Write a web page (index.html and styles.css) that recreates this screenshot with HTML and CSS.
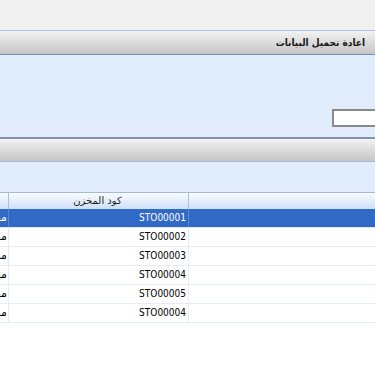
FILE: index.html
```html
<!DOCTYPE html>
<html lang="ar">
<head>
  <meta charset="UTF-8" />
  <meta name="viewport" content="width=device-width, initial-scale=1.0" />
  <title>اعادة تحميل البيانات</title>
  <link rel="stylesheet" href="styles.css">
</head>
<body>

  <div class="top"></div>

  <!-- section title -->
  <div class="bar bar-title">
    <span class="title">اعادة تحميل البيانات</span>
  </div>

  <div class="panel panel-search">
    <input type="text" class="search-box">
  </div>

  <div class="bar bar-plain"></div>
  <div class="panel panel-small"></div>

  <!-- stores grid -->
  <div class="grid">
    <div class="row head">
      <div class="cell c-extra"></div>
      <div class="cell c-code">كود المخزن</div>
      <div class="cell c-name"></div>
    </div>
    <div class="row selected">
      <div class="cell c-extra"></div>
      <div class="cell c-code">STO00001</div>
      <div class="cell c-name">مخزن</div>
    </div>
    <div class="row">
      <div class="cell c-extra"></div>
      <div class="cell c-code">STO00002</div>
      <div class="cell c-name">مخزن</div>
    </div>
    <div class="row">
      <div class="cell c-extra"></div>
      <div class="cell c-code">STO00003</div>
      <div class="cell c-name">مخزن</div>
    </div>
    <div class="row">
      <div class="cell c-extra"></div>
      <div class="cell c-code">STO00004</div>
      <div class="cell c-name">مخزن</div>
    </div>
    <div class="row">
      <div class="cell c-extra"></div>
      <div class="cell c-code">STO00005</div>
      <div class="cell c-name">مخزن</div>
    </div>
    <div class="row">
      <div class="cell c-extra"></div>
      <div class="cell c-code">STO00004</div>
      <div class="cell c-name">مخزن</div>
    </div>
  </div>

</body>
</html>
```

FILE: styles.css
```css
body {
  margin: 0;
  font-family: 'DejaVu Sans', sans-serif;
  font-size: 11px;
  background: #fff;
  color: #000;
  overflow: hidden;
}
.top {
  height: 30px;
  background: #f0f0f0;
}
.bar {
  background: linear-gradient(#f3f3f3, #c5c5c5);
}
.bar-title {
  height: 23px;
  border-top: 1px solid #aec3e6;
  border-bottom: 1px solid #7890b6;
  direction: rtl;
  display: flex;
  align-items: center;
  padding-right: 10px;
}
.title {
  font-family: 'DejaVu Sans Condensed', 'DejaVu Sans', sans-serif;
  font-weight: bold;
  font-size: 10px;
  color: #1a1a1a;
}
.panel {
  background: #e1edfd;
}
.panel-search {
  height: 82px;
  direction: rtl;
  box-sizing: border-box;
  padding-top: 54px;
}
.search-box {
  display: block;
  width: 60px;
  height: 18px;
  box-sizing: border-box;
  margin: 0 -17px 0 0;
  border: 2px solid #8a8a8a;
  border-right: none;
  background: #fff;
}
.bar-plain {
  height: 22px;
  border-top: 2px solid #8391aa;
  border-bottom: 1px solid #a2bde4;
}
.panel-small {
  height: 30px;
}
.grid {
  direction: rtl;
  overflow: hidden;
  width: 100%;
}
.row {
  display: flex;
  height: 18px;
  border-bottom: 1px solid #e3ecf8;
  white-space: nowrap;
}
.cell {
  flex-shrink: 0;
  box-sizing: border-box;
  line-height: 18px;
  overflow: hidden;
}
.c-extra {
  width: 187px;
  border-left: 1px solid #e3ecf8;
}
.c-code {
  width: 180px;
  padding-right: 2px;
  text-align: right;
  font-family: 'DejaVu Sans Condensed', 'DejaVu Sans', sans-serif;
  font-size: 10px;
  direction: ltr;
  border-left: 1px solid #e3ecf8;
}
.c-name {
  width: 8px;
  padding-right: 1px;
  text-align: right;
}
.head {
  height: 16px;
  border-top: 1px solid #9fbbe2;
  border-bottom: none;
  background: linear-gradient(#fbfdff, #cddff6);
}
.head .cell {
  line-height: 16px;
  border-left-color: #a3bfe4;
}
.head .c-code {
  text-align: center;
  direction: rtl;
  font-family: 'DejaVu Sans', sans-serif;
  font-size: 10px;
  color: #222;
}
.selected {
  background: #316ac5;
  color: #fff;
  border-bottom-color: #dce6f4;
}
.selected .cell {
  border-left-color: #5b88d2;
}
```
